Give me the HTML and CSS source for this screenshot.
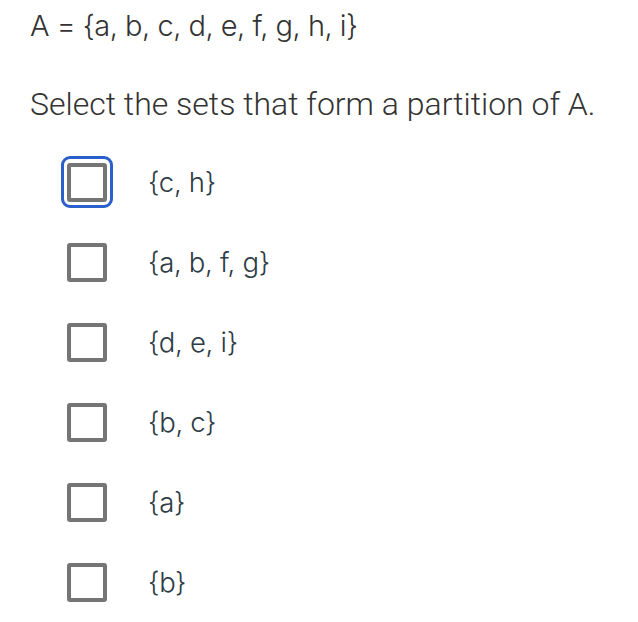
FILE: index.html
```html
<!DOCTYPE html>
<html>
<head>
<meta charset="utf-8">
<link rel="stylesheet" href="styles.css">
</head>
<body>
<div class="question">
  <p class="set-def">A = {a, b, c, d, e, f, g, h, i}</p>
  <p class="prompt">Select the sets that form a partition of A.</p>
  <ul class="options">
    <li class="option"><span class="box focused"><span class="inner"></span></span><span class="label">{c, h}</span></li>
    <li class="option"><span class="box"><span class="inner"></span></span><span class="label">{a, b, f, g}</span></li>
    <li class="option"><span class="box"><span class="inner"></span></span><span class="label">{d, e, i}</span></li>
    <li class="option"><span class="box"><span class="inner"></span></span><span class="label">{b, c}</span></li>
    <li class="option"><span class="box"><span class="inner"></span></span><span class="label">{a}</span></li>
    <li class="option"><span class="box"><span class="inner"></span></span><span class="label">{b}</span></li>
  </ul>
</div>
</body>
</html>
```

FILE: styles.css
```css
html, body {
  margin: 0;
  padding: 0;
  background: #ffffff;
}
body {
  font-family: Roboto, "Liberation Sans", sans-serif;
  font-weight: 300;
  color: #333333;
}
.question {
  padding: 6px 0 0 30px;
}
.set-def {
  margin: 0;
  font-family: Inter, Roboto, sans-serif;
  font-weight: 300;
  font-size: 29px;
  letter-spacing: -0.5px;
  line-height: 40px;
}
.prompt {
  margin: 38px 0 0 0;
  font-size: 32px;
  line-height: 40px;
}
.options {
  list-style: none;
  margin: 18px 0 0 0;
  padding: 0;
}
.option {
  display: flex;
  align-items: center;
  height: 80px;
  margin-left: 31px;
}
.box {
  width: 52px;
  height: 52px;
  box-sizing: border-box;
  display: flex;
  align-items: center;
  justify-content: center;
  border-radius: 9px;
  border: 3px solid transparent;
}
.box.focused {
  border-color: #2b5fc9;
}
.inner {
  width: 40px;
  height: 39px;
  box-sizing: border-box;
  border: 4px solid #757575;
  border-radius: 3px;
  background: #fff;
}
.label {
  margin-left: 35px;
  font-family: Inter, Roboto, sans-serif;
  font-weight: 300;
  font-size: 27.5px;
  letter-spacing: -0.3px;
  color: #2d3b45;
}
```
